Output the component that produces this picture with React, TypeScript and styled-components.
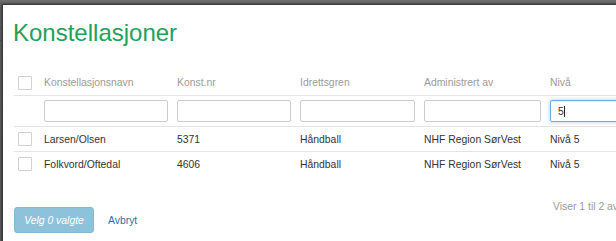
import React from 'react';
import styled, { createGlobalStyle } from 'styled-components';

const COLUMNS = '30px 133px 123px 124px 126px 150px';
const BODY_FONT = '10.4px';

const rows = [
  { name: 'Larsen/Olsen', nr: '5371', sport: 'Håndball', admin: 'NHF Region SørVest', level: 'Nivå 5' },
  { name: 'Folkvord/Oftedal', nr: '4606', sport: 'Håndball', admin: 'NHF Region SørVest', level: 'Nivå 5' },
];

const headers = ['Konstellasjonsnavn', 'Konst.nr', 'Idrettsgren', 'Administrert av', 'Nivå'];

const App: React.FC = () => {
  return (
    <Screen>
      <GlobalStyle />
      <BehindTitle>k</BehindTitle>
      <Modal>
        <Title>Konstellasjoner</Title>
        <Table>
          <Row $height={26}>
            <CheckCell>
              <Check type="checkbox" />
            </CheckCell>
            {headers.map((h) => (
              <HeadCell key={h}>{h}</HeadCell>
            ))}
          </Row>
          <Row $height={31}>
            <span />
            {headers.map((h, i) => {
              const focused = i === headers.length - 1;
              return (
                <FilterWrap key={h}>
                  <Filter $focused={focused} defaultValue={focused ? '5' : ''} />
                  {focused && <Caret />}
                </FilterWrap>
              );
            })}
          </Row>
          {rows.map((r, i) => (
            <Row key={r.nr} $height={i === rows.length - 1 ? 24 : 25} $last={i === rows.length - 1}>
              <CheckCell>
                <Check type="checkbox" />
              </CheckCell>
              <Cell>{r.name}</Cell>
              <Cell>{r.nr}</Cell>
              <Cell>{r.sport}</Cell>
              <Cell>{r.admin}</Cell>
              <Cell>{r.level}</Cell>
            </Row>
          ))}
        </Table>
        <Footer>
          <Actions>
            <SelectButton disabled>Velg 0 valgte</SelectButton>
            <CancelLink href="#">Avbryt</CancelLink>
          </Actions>
          <Info>Viser 1 til 2 av 2</Info>
        </Footer>
      </Modal>
    </Screen>
  );
};

export default App;

const GlobalStyle = createGlobalStyle`
  html, body {
    margin: 0;
    padding: 0;
    height: 100%;
    overflow: hidden;
    background: #6a6a6a;
  }
  body {
    font-family: 'Liberation Sans', Arial, sans-serif;
  }
`;

const Screen = styled('div')`
  position: relative;
  min-height: 241px;
  padding: 5px 0 0 3px;
  overflow: hidden;
  box-sizing: border-box;
  background: linear-gradient(#707070, #5c5c5c 6px, #575757);
`;

const BehindTitle = styled('span')`
  position: absolute;
  left: -11px;
  top: 19px;
  font-size: 24px;
  line-height: 27px;
  color: #1a5133;
`;

const Modal = styled('div')`
  width: 800px;
  min-height: 236px;
  background: #fff;
  padding: 14px 11px;
  box-sizing: border-box;
  box-shadow: 0 0 2px 1px rgba(0, 0, 0, 0.55);
`;

const Title = styled('h1')`
  margin: 0 0 0 -1px;
  font-size: 24px;
  line-height: 27px;
  font-weight: normal;
  color: #21a25c;
`;

const Table = styled('div')`
  margin-top: 24px;
`;

const Row = styled('div')<{ $height: number; $last?: boolean }>`
  display: grid;
  grid-template-columns: ${COLUMNS};
  align-items: center;
  height: ${({ $height }) => $height}px;
  box-sizing: border-box;
  border-bottom: ${({ $last }) => ($last ? 'none' : '1px solid #e4e4e4')};
  font-size: ${BODY_FONT};
`;

const CheckCell = styled('span')`
  display: flex;
  align-items: center;
  padding-left: 4px;
`;

const Check = styled('input')`
  appearance: none;
  margin: 0;
  width: 14px;
  height: 14px;
  border: 1px solid #d0d0d0;
  border-radius: 1px;
  background: #fff;
  box-sizing: border-box;
`;

const HeadCell = styled('span')`
  color: #9b9b9b;
  white-space: nowrap;
`;

const Cell = styled('span')`
  color: #333;
  white-space: nowrap;
`;

const FilterWrap = styled('span')`
  position: relative;
  display: block;
`;

const Filter = styled('input')<{ $focused?: boolean }>`
  display: block;
  width: calc(100% - 9px);
  height: 22px;
  box-sizing: border-box;
  padding: 0 7px;
  font-family: inherit;
  font-size: ${BODY_FONT};
  color: #333;
  border: 1px solid ${({ $focused }) => ($focused ? '#66afe9' : '#cccccc')};
  border-radius: 2px;
  outline: none;
  box-shadow: ${({ $focused }) =>
    $focused ? 'inset 0 1px 1px rgba(0,0,0,.075), 0 0 4px rgba(102,175,233,.6)' : 'none'};
`;

const Caret = styled('span')`
  position: absolute;
  left: 14px;
  top: 6px;
  width: 1px;
  height: 11px;
  background: #222;
`;

const Footer = styled('div')`
  display: grid;
  grid-template-columns: ${COLUMNS};
  align-items: start;
  margin-top: 24px;
  font-size: ${BODY_FONT};
`;

const Actions = styled('div')`
  grid-column: 1 / 6;
  display: flex;
  align-items: center;
  gap: 14px;
  margin-top: 7px;
`;

const SelectButton = styled('button')`
  width: 80px;
  height: 26px;
  padding: 0;
  font-family: inherit;
  font-size: ${BODY_FONT};
  font-style: italic;
  color: #fff;
  background: #8dc2da;
  border: 1px solid #80b9d3;
  border-radius: 3px;
`;

const CancelLink = styled('a')`
  color: #2c6fad;
  text-decoration: none;
`;

const Info = styled('span')`
  grid-column: 6 / 7;
  line-height: 14px;
  padding-left: 3px;
  color: #9b9b9b;
  white-space: nowrap;
`;
